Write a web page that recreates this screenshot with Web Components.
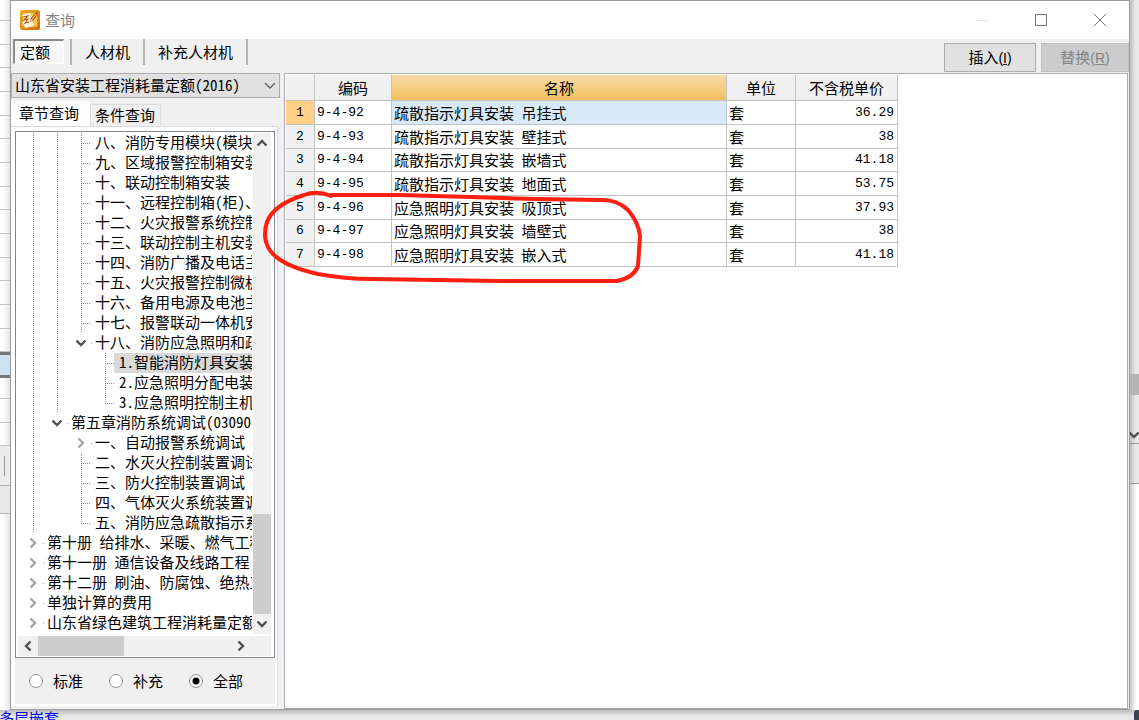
<!DOCTYPE html>
<html lang="zh-CN">
<head>
<meta charset="utf-8">
<title>查询</title>
<style>
html, body { margin: 0; height: 100%; }
body {
  font-family: "Noto Sans Mono CJK SC", "Noto Sans CJK SC", "Liberation Sans", sans-serif;
  font-size: 15px; line-height: 20px; color: #000; background: #e6e6e6; overflow: hidden;
}
</style>
</head>
<body>
<app-desktop>
  <query-dialog></query-dialog>
</app-desktop>
<script>
function define(name, html, setup) {
  customElements.define(name, class extends HTMLElement {
    constructor() {
      super();
      const t = document.createElement('template');
      t.innerHTML = '<style>*{box-sizing:border-box}button,select,input{font:inherit;color:inherit;margin:0;white-space:nowrap}</style>' + html;
      this.attachShadow({ mode: 'open' }).append(t.content.cloneNode(true));
      if (setup) setup(this, this.shadowRoot);
    }
  });
}

/* Small chevron used by scroll bars, tree nodes and the combo box */
define('ui-chevron', `
<style>
:host { display: inline-flex; color: #505050; }
svg { display: block; width: 12px; height: 12px; }
:host([dir2=up]) svg { transform: rotate(180deg); }
:host([dir2=left]) svg { transform: rotate(90deg); }
:host([dir2=right]) svg { transform: rotate(-90deg); }
</style>
<svg viewBox="0 0 12 12" fill="none" stroke="currentColor" stroke-width="2.4"><path d="M1.5 3.5 6 8l4.5-4.5"/></svg>`);

/* The application window behind the dialog */
define('app-desktop', `
<style>
:host { display: grid; grid-template: minmax(0,1fr) 10px / 10px minmax(0,1fr) 9px; height: 100vh; min-height: 600px; }
.rail { display: flex; flex-direction: column; overflow: hidden; background: #fcfcfc; }
.left { background: linear-gradient(90deg, #fff 30%, #e4e4e4); }
.rows { flex: none; }
.rows i { display: block; height: 24px; border-bottom: 1px solid #c4c4c4; }
.rows i:nth-child(3n) { height: 23px; }
.rows i:first-child { height: 21px; }
.sel { flex: none; height: 26px; background: #cde3f1; border: solid #777; border-width: 3px 0; }
.bar { flex: none; height: 40px; background: #ececec; border-bottom: 1px solid #aaa; padding: 10px 4px; }
.bar::before { content: ""; display: block; height: 20px; width: 1px; background: #999; }
.bar2 { flex: none; height: 28px; background: #e8e8e8; border-bottom: 1px solid #bbb; }
.right { background: linear-gradient(90deg, #bdbdbd, #e8e8e8 60%); }
.gap { flex: none; height: 374px; }
.thumb { flex: none; height: 21px; background: #b4b4b4; }
.arrow { flex: none; height: 49px; padding-top: 30px; border-bottom: 1px solid #9a9aa2; overflow: hidden; }
.arrow ui-chevron { margin-left: -2px; }
.status { flex: none; height: 40px; border-bottom: 1px solid #9a9aa2; }
.blank { flex: 1; background: linear-gradient(90deg, #c9c9c9, #fff 70%); }
.foot { grid-column: 1 / -1; display: flex; justify-content: space-between; overflow: hidden;
  background: linear-gradient(#bcbcbc, #e8e8e8 60%); color: #00e; }
.foot a { color: #00e; text-decoration: none; margin-left: -1px; line-height: 16px; }
.foot i { width: 5px; background: #3b4250; border-top-left-radius: 3px; }
</style>
<div class="rail left"><div class="rows"></div><div class="sel"></div><div class="rows tail"></div><div class="bar"></div><div class="bar2"></div></div>
<slot></slot>
<div class="rail right"><div class="gap"></div><div class="thumb"></div><div class="arrow"><ui-chevron></ui-chevron></div><div class="status"></div><div class="blank"></div></div>
<div class="foot"><a href="#">多层嵌套</a><i></i></div>`,
(host, r) => {
  r.querySelector('.rows').innerHTML = '<i></i>'.repeat(15);
  r.querySelector('.tail').innerHTML = '<i></i>'.repeat(3);
});

define('title-bar', `
<style>
:host { display: flex; align-items: center; height: 38px; background: #fff; padding-left: 9px; color: #858585; flex: none; }
.logo { width: 20px; height: 20px; margin-right: 5px; }
span { flex: 1; }
button { width: 59px; height: 38px; border: 0; background: none; padding: 0; display: grid; place-items: center; }
</style>
<svg class="logo" viewBox="0 0 20 20"><defs><linearGradient id="g" x2="1" y2="1"><stop stop-color="#f7b52c"/><stop offset="1" stop-color="#cf6409"/></linearGradient></defs>
<rect width="20" height="20" rx="2" fill="url(#g)"/><rect x="2" y="2" width="15.500" height="15" fill="#f6c74a" stroke="#e08a17"/><path d="M2 5 10 3l1 3 2 1-1 2 2 7-9 2-1-4-2-1 2-3z" fill="#fff6dc"/><path d="m3 7 5-1-4 4 4-1-3 4 4-1" fill="none" stroke="#a8581a" stroke-width="1.100"/><path d="m10 12 1-4 5-6 2 1-4 7z" fill="#b9550c"/><path d="m11 11 5-7" stroke="#ffe9a5" stroke-width="1"/></svg>
<span>查询</span>
<button aria-label="最小化"><svg width="12" height="12"><path d="M0 6.500h12" stroke="#e2e2e2"/></svg></button>
<button aria-label="最大化"><svg width="12" height="12"><path d="M.5.5h11v11H.5z" fill="none" stroke="#777"/></svg></button>
<button aria-label="关闭"><svg width="12" height="12"><path d="m0 0 12 12M12 0 0 12" stroke="#777"/></svg></button>`);

define('tool-bar', `
<style>
:host { display: flex; height: 34px; flex: none; }
nav { display: flex; flex: 1; height: 26px; padding-left: 2px; }
nav button { border: 0; background: none; padding: 0 13px; height: 26px; border-right: 2px solid #b4b4b4; line-height: 24px; }
nav .on { padding: 0 0 0 5px; width: 51px; height: 25px; text-align: left; background: #f8f8f8; border: solid; border-width: 2px 1px 1px 2px; border-color: #8c8c8c #fff #fff #8c8c8c; line-height: 22px; }
nav hr { width: 2px; margin: 0 0 0 6px; border: 0; background: #b4b4b4; }
.act { height: 29px; margin: 4px 0 0 5px; width: 92px; border: 1px solid #adadad; background: #e1e1e1; padding: 0; }
.act span { font-family: "Liberation Sans", sans-serif; font-size: 14px; }
.act[disabled] { width: 88px; background: #ccc; border-color: #bfbfbf; color: #838383; }
</style>
<nav><button class="on" aria-pressed="true">定额</button><hr><button>人材机</button><button>补充人材机</button></nav>
<button class="act">插入<span>(<u>I</u>)</span></button><button class="act" disabled>替换<span>(<u>R</u>)</span></button>`);

/* One tree row. guides: v = line, t = tee, e = last tee, o = open, c = closed, . = blank */
define('tree-row', `
<style>
:host { display: flex; height: 20px; line-height: 18px; white-space: nowrap; }
i { position: relative; flex: none; width: 24px; height: 20px; display: grid; place-items: center; }
.v { background: repeating-linear-gradient(#8f8f8f 0 1px, transparent 1px 2px) 12px 0 / 1px 100% no-repeat; }
.t, .e { background: repeating-linear-gradient(#8f8f8f 0 1px, transparent 1px 2px) 12px 0 / 1px 100% no-repeat,
  repeating-linear-gradient(90deg, #8f8f8f 0 1px, transparent 1px 2px) 12px 10px / 10px 1px no-repeat; }
.e { background-size: 1px 11px, 10px 1px; }
.o, .c { background: linear-gradient(#aaa, #aaa) 22px 10px / 1px 1px no-repeat; }
.c ui-chevron { color: #a6a6a6; }
span { margin-left: -3px; padding-left: 5px; flex: 1 0 auto; }
:host([selected]) span { background: #d9d9d9; }
</style><span><slot></slot></span>`,
(host, r) => {
  const span = r.querySelector('span');
  for (const g of host.getAttribute('guides')) {
    const i = document.createElement('i');
    i.className = g === '.' ? '' : g;
    if (g === 'o') i.innerHTML = '<ui-chevron></ui-chevron>';
    if (g === 'c') i.innerHTML = '<ui-chevron dir2="right"></ui-chevron>';
    span.before(i);
  }
});

define('chapter-tree', `
<style>
:host { display: grid; grid-template: minmax(0,1fr) 20px / minmax(0,1fr) 18px; gap: 2px 1px; border: 1px solid #828790; padding: 1px 3px 1px 0; background: #fff; }
.list { overflow: hidden; padding-left: 5px; }
.vs { display: flex; flex-direction: column; background: #f0f0f0; }
.hs { display: flex; grid-column: 1 / -1; background: #f0f0f0; margin-left: 2px; padding-right: 20px; }
ui-chevron { flex: none; width: 20px; height: 20px; align-items: center; justify-content: center; }
.vs ui-chevron { width: 18px; }
.a { flex: 36; } .b { flex: 10; background: #cdcdcd; }
.c { flex: 86; background: #cdcdcd; } .d { flex: 106; }
</style>
<div class="list" role="tree">
<tree-row guides="vvt">八、消防专用模块(模块</tree-row>
<tree-row guides="vvt">九、区域报警控制箱安装</tree-row>
<tree-row guides="vvt">十、联动控制箱安装</tree-row>
<tree-row guides="vvt">十一、远程控制箱(柜)、</tree-row>
<tree-row guides="vvt">十二、火灾报警系统控制</tree-row>
<tree-row guides="vvt">十三、联动控制主机安装</tree-row>
<tree-row guides="vvt">十四、消防广播及电话主</tree-row>
<tree-row guides="vvt">十五、火灾报警控制微机</tree-row>
<tree-row guides="vvt">十六、备用电源及电池主</tree-row>
<tree-row guides="vvt">十七、报警联动一体机安</tree-row>
<tree-row guides="vvo">十八、消防应急照明和疏</tree-row>
<tree-row guides="vv.t" selected>1.智能消防灯具安装</tree-row>
<tree-row guides="vv.t">2.应急照明分配电装</tree-row>
<tree-row guides="vv.e">3.应急照明控制主机</tree-row>
<tree-row guides="vo">第五章消防系统调试(03090</tree-row>
<tree-row guides="v.c">一、自动报警系统调试</tree-row>
<tree-row guides="v.t">二、水灭火控制装置调试</tree-row>
<tree-row guides="v.t">三、防火控制装置调试</tree-row>
<tree-row guides="v.t">四、气体灭火系统装置调</tree-row>
<tree-row guides="v.e">五、消防应急疏散指示系</tree-row>
<tree-row guides="c">第十册 给排水、采暖、燃气工程</tree-row>
<tree-row guides="c">第十一册 通信设备及线路工程</tree-row>
<tree-row guides="c">第十二册 刷油、防腐蚀、绝热工</tree-row>
<tree-row guides="c">单独计算的费用</tree-row>
<tree-row guides="c">山东省绿色建筑工程消耗量定额</tree-row>
</div>
<div class="vs"><ui-chevron dir2="up"></ui-chevron><div class="a"></div><div class="b"></div><ui-chevron></ui-chevron></div>
<div class="hs"><ui-chevron dir2="left"></ui-chevron><div class="c"></div><div class="d"></div><ui-chevron dir2="right"></ui-chevron></div>`);

define('side-pane', `
<style>
:host { display: flex; flex-direction: column; width: 273px; flex: none; }
.combo { display: grid; align-items: center; width: 269px; flex: none; }
.combo > * { grid-area: 1 / 1; }
select { appearance: none; width: 100%; height: 25px; border: 1px solid #adadad; border-radius: 0; background: #e1e1e1; padding: 0 3px 2px; }
.combo svg { justify-self: end; margin-right: 4px; pointer-events: none; }
.tabs { display: flex; align-items: flex-end; height: 25px; margin-top: 3px; flex: none; }
.tabs button { border: 1px solid #dcdcdc; border-width: 1px 1px 0; background: #f0f0f0; height: 22px; width: 71px; padding: 0 4px 2px; text-align: left; line-height: 20px; }
.tabs .on { background: #fff; height: 25px; width: 79px; padding: 0 7px 2px; border-color: #fff; }
.page { flex: 1; min-height: 0; width: 267px; margin-bottom: 3px; display: flex; flex-direction: column; background: #fff; border: solid #dcdcdc; border-width: 1px 1px 0 0; padding: 4px 2px 2px 4px; }
chapter-tree { flex: 1; min-height: 0; }
form { display: flex; height: 46px; align-items: center; background: #f0f0f0; padding-left: 14px; }
label { display: flex; align-items: center; width: 80px; gap: 10px; }
input { appearance: none; width: 14px; height: 14px; border: 1px solid #8c8c8c; border-radius: 50%; background: #fff; }
input:checked { background: radial-gradient(circle, #000 3px, #fff 4px); }
</style>
<div class="combo"><select aria-label="定额库"><option>山东省安装工程消耗量定额(2016)</option></select>
<svg width="12" height="8" fill="none" stroke="#606060" stroke-width="1.300"><path d="m1 1 5 5 5-5"/></svg></div>
<div class="tabs" role="tablist"><button class="on" role="tab" aria-selected="true">章节查询</button><button role="tab">条件查询</button></div>
<div class="page"><chapter-tree></chapter-tree>
<form><label><input type="radio" name="k">标准</label><label><input type="radio" name="k">补充</label><label><input type="radio" name="k" checked>全部</label></form></div>`);

define('quota-table', `
<style>
:host { display: block; flex: 1; min-width: 0; background: #fff; border: 1px solid #a9abb5; padding: 1px; margin-right: 1px; }
table { table-layout: fixed; width: 612px; border-collapse: separate; border-spacing: 0; }
th, td { padding: 0 2px; font-weight: 400; border: solid #c3c3c3; border-width: 0 1px 1px 0; overflow: hidden; white-space: nowrap; line-height: 20px; text-align: left; }
thead tr { height: 26px; }
tbody tr { height: 24px; }
tbody tr:nth-child(3n) { height: 23px; }
thead th { background: #f0f0f0; text-align: center; }
thead .cur { background: linear-gradient(#f9dba4, #f0bf60); }
tbody th { background: #f0f0f0; text-align: center; }
.n { font-family: "Liberation Mono", monospace; font-size: 13px; }
td:last-child { text-align: right; padding-right: 3px; }
tbody tr:first-child th { background: #ffd085; }
tbody tr:first-child td:nth-child(3) { background: #d8eaf9; }
</style>
<table><colgroup><col style="width:29px"><col style="width:77px"><col style="width:335px"><col style="width:69px"><col style="width:102px"></colgroup>
<thead><tr><th></th><th>编码</th><th class="cur">名称</th><th>单位</th><th>不含税单价</th></tr></thead><tbody></tbody></table>`,
(host, r) => {
  const rows = [['92', '疏散指示灯具安装 吊挂式', '36.29'], ['93', '疏散指示灯具安装 壁挂式', '38'], ['94', '疏散指示灯具安装 嵌墙式', '41.18'],
    ['95', '疏散指示灯具安装 地面式', '53.75'], ['96', '应急照明灯具安装 吸顶式', '37.93'], ['97', '应急照明灯具安装 墙壁式', '38'], ['98', '应急照明灯具安装 嵌入式', '41.18']];
  r.querySelector('tbody').innerHTML = rows.map(([c, n, p], i) =>
    `<tr><th class="n" scope="row">${i + 1}</th><td class="n">9-4-${c}</td><td>${n}</td><td>套</td><td class="n">${p}</td></tr>`).join('');
});

/* Freehand red ring drawn over rows 5 to 7 */
define('red-mark', `
<style>
:host { position: absolute; left: 260px; top: 188px; pointer-events: none; }
svg { display: block; }
</style>
<svg width="386" height="100" viewBox="260 188 386 100" fill="none" stroke="#ff1f10" stroke-width="4" stroke-linecap="round" stroke-linejoin="round"><path d="M331 196C322 192 312 192 304 195C288 200 272 209 267 222C263 234 265 246 273 254C283 264 300 270 318 274C334 277 350 279 372 279L500 281 617 281C628 279 635 274 638 266L640 236C639 226 634 217 628 210C620 202 612 200 602 200L535 199 470 197 400 195 331 195"/></svg>`);

define('query-dialog', `
<style>
:host { display: flex; flex-direction: column; position: relative; min-width: 0; min-height: 0; background: #f0f0f0; border: 1px solid #9c9c9f; }
main { display: flex; flex: 1; min-height: 0; }
.over { position: absolute; left: -11px; top: -1px; }
</style>
<title-bar></title-bar>
<tool-bar></tool-bar>
<main><side-pane></side-pane><quota-table></quota-table></main>
<div class="over"><red-mark></red-mark></div>`);
</script>
</body>
</html>
